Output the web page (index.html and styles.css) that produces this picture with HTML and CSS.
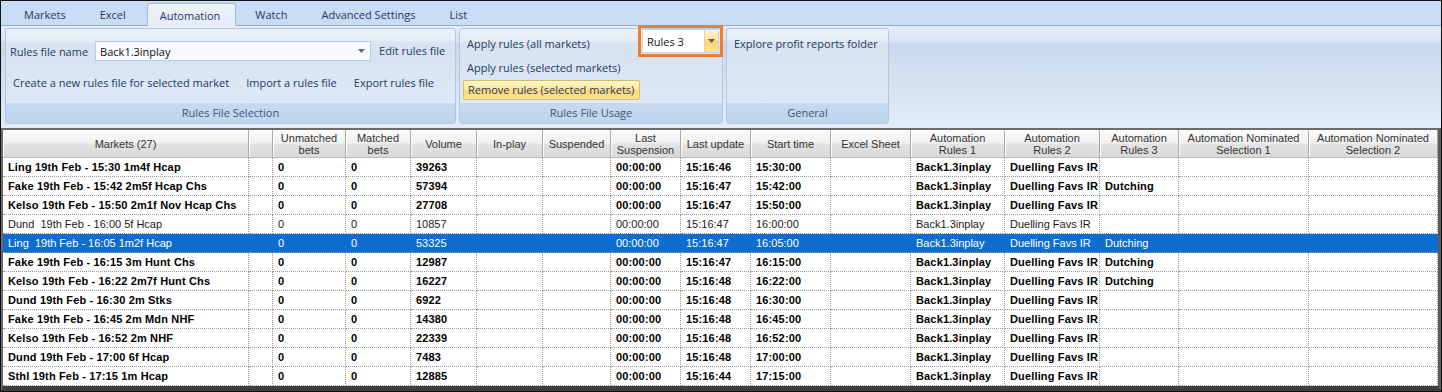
FILE: index.html
```html
<!DOCTYPE html>
<html lang="en">
<head>
    <meta charset="UTF-8">
    <meta name="viewport" content="width=device-width, initial-scale=1.0">
    <title>Automation</title>
    <link rel="stylesheet" href="styles.css">
</head>
<body>
    <div class="window">
        <div class="tabs">
            <div class="tab">Markets</div>
            <div class="tab">Excel</div>
            <div class="tab active">Automation</div>
            <div class="tab">Watch</div>
            <div class="tab">Advanced Settings</div>
            <div class="tab">List</div>
        </div>

        <div class="ribbon">
            <div class="group group-files">
                <div class="group-body">
                    <div class="row files-top">
                        <span class="label">Rules file name</span>
                        <div class="combo combo-file">
                            <span>Back1.3inplay</span>
                            <svg class="arrow" width="7" height="4" viewBox="0 0 7 4"><path d="M0 0h7L3.5 4z"/></svg>
                        </div>
                        <span class="btn">Edit rules file</span>
                    </div>
                    <div class="row files-bottom">
                        <span class="btn">Create a new rules file for selected market</span>
                        <span class="btn">Import a rules file</span>
                        <span class="btn">Export rules file</span>
                    </div>
                </div>
                <div class="group-label">Rules File Selection</div>
            </div>

            <div class="group group-usage">
                <div class="group-body">
                    <div class="row usage-top">
                        <span class="btn apply-all">Apply rules (all markets)</span>
                        <div class="combo combo-rules">
                            <span>Rules 3</span>
                            <span class="drop">
                                <svg width="7" height="4" viewBox="0 0 7 4"><path d="M0 0h7L3.5 4z"/></svg>
                            </span>
                        </div>
                    </div>
                    <div class="usage-mid"><span class="btn">Apply rules (selected markets)</span></div>
                    <div class="remove-btn">Remove rules (selected markets)</div>
                </div>
                <div class="group-label">Rules File Usage</div>
            </div>

            <div class="group group-general">
                <div class="group-body general-body">
                    <span class="btn">Explore profit reports folder</span>
                </div>
                <div class="group-label">General</div>
            </div>
        </div>

        <div class="grid">
            <table>
                <colgroup>
                    <col class="w-market"><col class="w-blank"><col class="w-unmatched"><col class="w-matched">
                    <col class="w-volume"><col class="w-inplay"><col class="w-susp"><col class="w-lastsusp">
                    <col class="w-update"><col class="w-start"><col class="w-excel"><col class="w-rules1">
                    <col class="w-rules2"><col class="w-rules3"><col class="w-sel1"><col class="w-sel2">
                </colgroup>
                <tr class="head">
                    <th>Markets (27)</th><th></th><th>Unmatched<br>bets</th><th>Matched<br>bets</th>
                    <th>Volume</th><th>In-play</th><th>Suspended</th><th>Last<br>Suspension</th>
                    <th>Last update</th><th>Start time</th><th>Excel Sheet</th><th>Automation<br>Rules 1</th>
                    <th>Automation<br>Rules 2</th><th>Automation<br>Rules 3</th>
                    <th>Automation Nominated<br>Selection 1</th><th>Automation Nominated<br>Selection 2</th>
                </tr>
                <tr class="bold"><td>Ling 19th Feb - 15:30 1m4f Hcap</td><td></td><td>0</td><td>0</td><td>39263</td><td></td><td></td><td>00:00:00</td><td>15:16:46</td><td>15:30:00</td><td></td><td>Back1.3inplay</td><td>Duelling Favs IR</td><td></td><td></td><td></td></tr>
                <tr class="bold"><td>Fake 19th Feb - 15:42 2m5f Hcap Chs</td><td></td><td>0</td><td>0</td><td>57394</td><td></td><td></td><td>00:00:00</td><td>15:16:47</td><td>15:42:00</td><td></td><td>Back1.3inplay</td><td>Duelling Favs IR</td><td>Dutching</td><td></td><td></td></tr>
                <tr class="bold"><td>Kelso 19th Feb - 15:50 2m1f Nov Hcap Chs</td><td></td><td>0</td><td>0</td><td>27708</td><td></td><td></td><td>00:00:00</td><td>15:16:47</td><td>15:50:00</td><td></td><td>Back1.3inplay</td><td>Duelling Favs IR</td><td></td><td></td><td></td></tr>
                <tr><td>Dund&nbsp; 19th Feb - 16:00 5f Hcap</td><td></td><td>0</td><td>0</td><td>10857</td><td></td><td></td><td>00:00:00</td><td>15:16:47</td><td>16:00:00</td><td></td><td>Back1.3inplay</td><td>Duelling Favs IR</td><td></td><td></td><td></td></tr>
                <tr class="sel"><td>Ling&nbsp; 19th Feb - 16:05 1m2f Hcap</td><td></td><td>0</td><td>0</td><td>53325</td><td></td><td></td><td>00:00:00</td><td>15:16:47</td><td>16:05:00</td><td></td><td>Back1.3inplay</td><td>Duelling Favs IR</td><td>Dutching</td><td></td><td></td></tr>
                <tr class="bold"><td>Fake 19th Feb - 16:15 3m Hunt Chs</td><td></td><td>0</td><td>0</td><td>12987</td><td></td><td></td><td>00:00:00</td><td>15:16:47</td><td>16:15:00</td><td></td><td>Back1.3inplay</td><td>Duelling Favs IR</td><td>Dutching</td><td></td><td></td></tr>
                <tr class="bold"><td>Kelso 19th Feb - 16:22 2m7f Hunt Chs</td><td></td><td>0</td><td>0</td><td>16227</td><td></td><td></td><td>00:00:00</td><td>15:16:48</td><td>16:22:00</td><td></td><td>Back1.3inplay</td><td>Duelling Favs IR</td><td>Dutching</td><td></td><td></td></tr>
                <tr class="bold"><td>Dund 19th Feb - 16:30 2m Stks</td><td></td><td>0</td><td>0</td><td>6922</td><td></td><td></td><td>00:00:00</td><td>15:16:48</td><td>16:30:00</td><td></td><td>Back1.3inplay</td><td>Duelling Favs IR</td><td></td><td></td><td></td></tr>
                <tr class="bold"><td>Fake 19th Feb - 16:45 2m Mdn NHF</td><td></td><td>0</td><td>0</td><td>14380</td><td></td><td></td><td>00:00:00</td><td>15:16:48</td><td>16:45:00</td><td></td><td>Back1.3inplay</td><td>Duelling Favs IR</td><td></td><td></td><td></td></tr>
                <tr class="bold"><td>Kelso 19th Feb - 16:52 2m NHF</td><td></td><td>0</td><td>0</td><td>22339</td><td></td><td></td><td>00:00:00</td><td>15:16:48</td><td>16:52:00</td><td></td><td>Back1.3inplay</td><td>Duelling Favs IR</td><td></td><td></td><td></td></tr>
                <tr class="bold"><td>Dund 19th Feb - 17:00 6f Hcap</td><td></td><td>0</td><td>0</td><td>7483</td><td></td><td></td><td>00:00:00</td><td>15:16:48</td><td>17:00:00</td><td></td><td>Back1.3inplay</td><td>Duelling Favs IR</td><td></td><td></td><td></td></tr>
                <tr class="bold"><td>Sthl 19th Feb - 17:15 1m Hcap</td><td></td><td>0</td><td>0</td><td>12885</td><td></td><td></td><td>00:00:00</td><td>15:16:44</td><td>17:15:00</td><td></td><td>Back1.3inplay</td><td>Duelling Favs IR</td><td></td><td></td><td></td></tr>
            </table>
        </div>
    </div>
</body>
</html>
```

FILE: styles.css
```css
body {
    margin: 0;
    font-family: "Liberation Sans", Arial, sans-serif;
    background: #fff;
}
.window {
    width: 1442px;
    height: 392px;
    box-sizing: border-box;
    border: 1px solid #101010;
    display: flex;
    flex-direction: column;
    overflow: hidden;
    background: #c8dcf5;
}

/* tab strip */
.tabs {
    height: 24px;
    flex: none;
    display: flex;
    align-items: flex-end;
    padding-left: 6px;
    border-bottom: 1px solid #97adc9;
    background: #c8dcf5;
    font-family: "Open Sans", sans-serif;
    font-size: 11px;
    color: #1f3a5c;
}
.tab {
    height: 22px;
    line-height: 24px;
    padding: 0 17px;
}
.tab.active {
    margin: 0 2px -1px 4px;
    padding: 0 15px 0 12px;
    line-height: 23px;
    border: 1px solid #a3b8d3;
    border-bottom: none;
    border-radius: 3px 3px 0 0;
    background: linear-gradient(#edf3fb, #e4ecf7);
}

/* ribbon */
.ribbon {
    height: 102px;
    flex: none;
    box-sizing: border-box;
    display: flex;
    gap: 3px;
    padding: 2px 0 0 4px;
    background: linear-gradient(#e4ecf7 0px, #dae5f3 14px, #c9d9ed 18px, #d3e1f2 55px, #e2edf9 100%);
    font-family: "Open Sans", sans-serif;
    font-size: 11px;
    color: #1f3a5c;
}
.group {
    height: 96px;
    box-sizing: border-box;
    border: 1px solid #b1c6df;
    border-radius: 3px;
    display: flex;
    flex-direction: column;
    background: linear-gradient(rgba(255, 255, 255, 0.3), rgba(255, 255, 255, 0.05));
}
.group-files { width: 451px; }
.group-usage { width: 264px; }
.group-general { width: 163px; }
.group-body {
    flex: 1;
    padding: 0 3px;
}
.group-label {
    height: 20px;
    line-height: 19px;
    text-align: center;
    background: linear-gradient(#c6d9ef, #c0d4ec);
    color: #3a5677;
}
.row {
    display: flex;
    align-items: center;
}
.label {
    padding: 0 1px;
}
.btn {
    padding: 0 4px;
    line-height: 20px;
    white-space: nowrap;
}
.files-top {
    height: 20px;
    margin-top: 12px;
}
.files-bottom {
    height: 20px;
    margin-top: 12px;
    gap: 9px;
}
.combo {
    box-sizing: border-box;
    display: flex;
    align-items: center;
    justify-content: space-between;
    color: #111;
    background: #f8fafd;
}
.combo-file {
    width: 276px;
    height: 20px;
    margin: 0 4px 0 6px;
    padding: 0 5px 0 4px;
    border: 1px solid #b9cde3;
}
.arrow path { fill: #5b6b80; }

.usage-top {
    height: 27px;
    align-items: flex-start;
    justify-content: space-between;
}
.apply-all {
    margin-top: 5px;
}
.combo-rules {
    width: 77px;
    height: 24px;
    padding-left: 4px;
    border: 1px solid #c8d3df;
    background: #fff;
    outline: 3px solid #f07d2b;
    outline-offset: 1px;
}
.drop {
    width: 13px;
    height: 22px;
    display: flex;
    align-items: center;
    justify-content: center;
    border-left: 1px solid #ead28a;
    background: linear-gradient(#fff6cf, #fbe08a 50%, #f8d367 51%, #fbe6a0);
}
.drop path { fill: #5c5c5c; }
.usage-mid {
    height: 24px;
    line-height: 24px;
}
.usage-mid .btn { line-height: 24px; }
.remove-btn {
    width: fit-content;
    height: 20px;
    box-sizing: border-box;
    line-height: 18px;
    padding: 0 5px 0 4px;
    border: 1px solid #dcbc62;
    border-radius: 2px;
    background: linear-gradient(#fff6cc, #fde89c 45%, #fcd772 55%, #fde39a);
}
.general-body {
    padding-top: 5px;
}

/* market grid */
.grid {
    flex: 1;
    border-style: solid;
    border-color: #6c6c6c #5a5a5a #3e3e3e #6c6c6c;
    border-width: 2px 3px 5px 2px;
    background: #fff;
    overflow: hidden;
}
table {
    border-collapse: separate;
    border-spacing: 0;
    table-layout: fixed;
    width: 1435px;
    font-size: 11px;
}
.w-market { width: 246px; }
.w-blank { width: 24px; }
.w-unmatched { width: 73px; }
.w-matched { width: 65px; }
.w-volume { width: 66px; }
.w-inplay { width: 66px; }
.w-susp { width: 68px; }
.w-lastsusp { width: 70px; }
.w-update { width: 70px; }
.w-start { width: 80px; }
.w-excel { width: 80px; }
.w-rules1 { width: 94px; }
.w-rules2 { width: 95px; }
.w-rules3 { width: 79px; }
.w-sel1 { width: 130px; }
.w-sel2 { width: 129px; }

tr.head { height: 28px; }
th {
    padding: 0 2px;
    font-weight: normal;
    line-height: 12px;
    color: #333;
    text-align: center;
    vertical-align: middle;
    border-right: 1px solid #a9a9a9;
    border-bottom: 1px solid #bdbdbd;
    box-shadow: inset 1px 0 #fff;
    background: linear-gradient(#fbfbfb, #f1f1f1 48%, #e3e3e3 52%, #d9d9d9);
    white-space: nowrap;
}
tr { height: 19px; }
td {
    padding: 0 0 0 5px;
    line-height: 14px;
    color: #1a1a1a;
    border-right: 1px dotted #9a9a9a;
    border-bottom: 1px dotted #9a9a9a;
    white-space: nowrap;
    overflow: hidden;
}
tr.bold td {
    font-weight: bold;
    letter-spacing: 0.15px;
    color: #000;
}
tr.sel td {
    background: #0e6ed0;
    color: #fff;
    border-right-color: transparent;
}
```
